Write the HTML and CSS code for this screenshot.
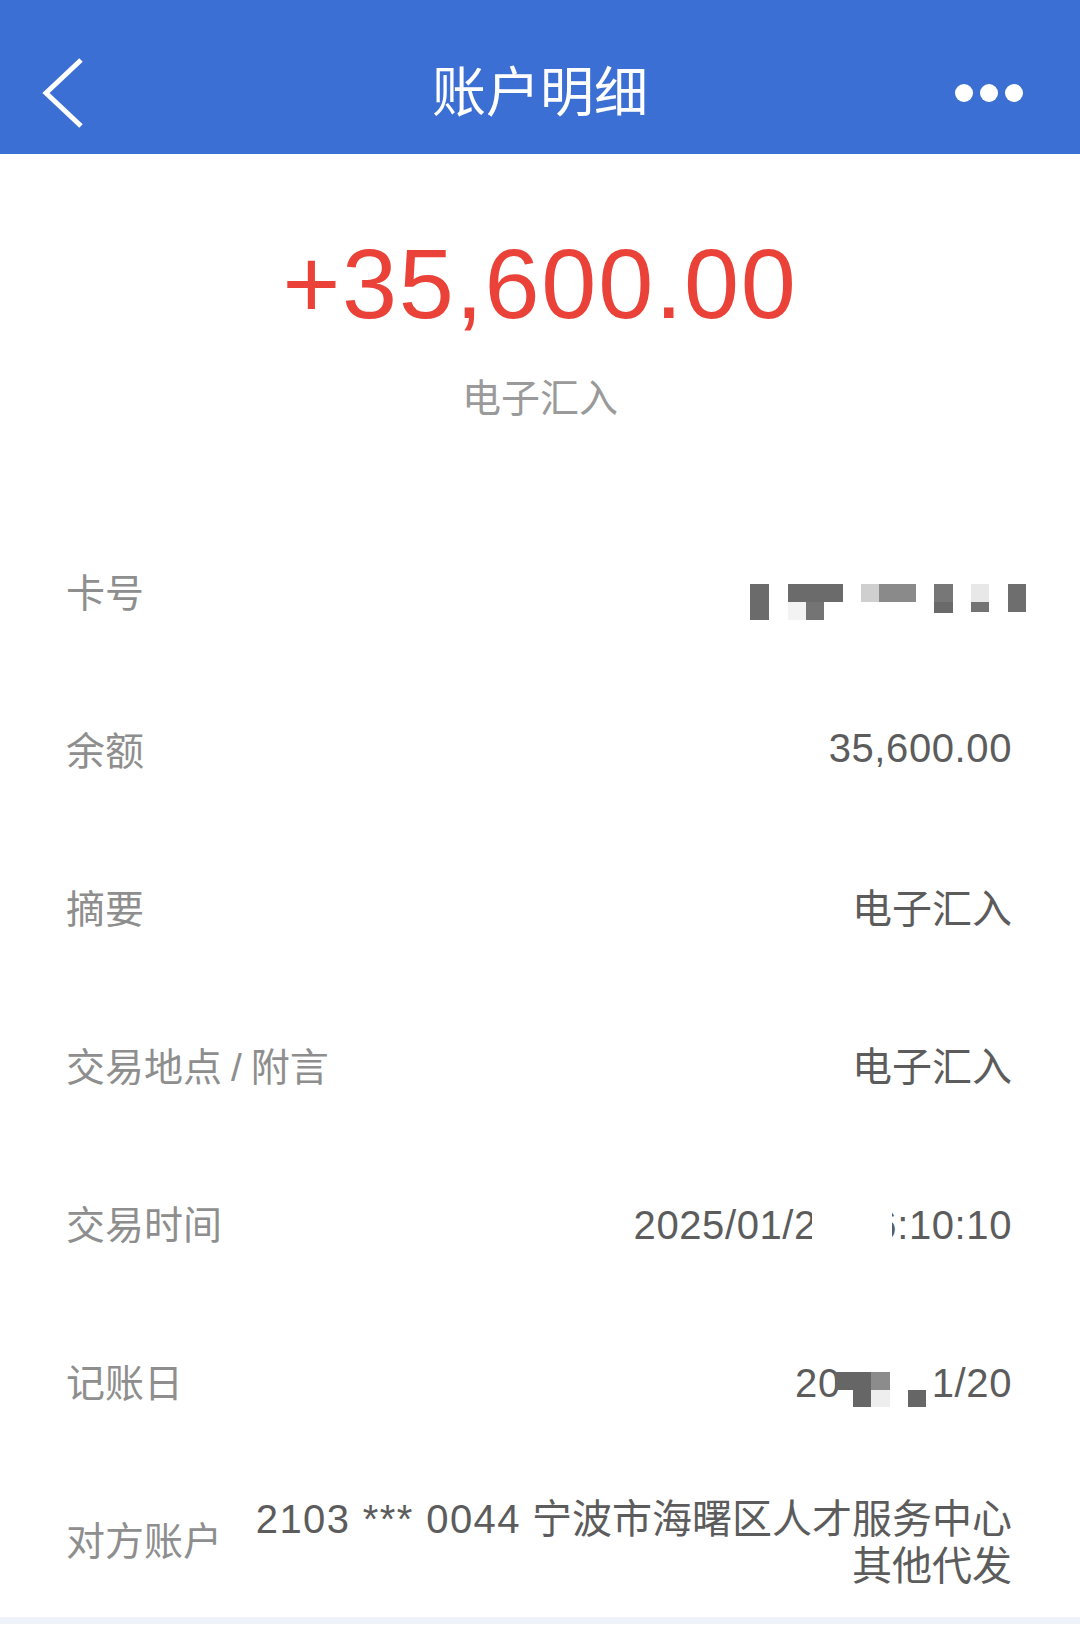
FILE: index.html
```html
<!DOCTYPE html>
<html lang="zh-CN">
<head>
  <meta charset="UTF-8" />
  <title>账户明细</title>
  <link rel="stylesheet" href="styles.css">
</head>
<body>
  <header class="topbar">
    <div class="topbar-left">
      <svg class="back" width="44" height="70" viewBox="0 0 44 70">
        <polyline points="39,2 4,35 39,68" fill="none" stroke="#fff" stroke-width="5" />
      </svg>
    </div>
    <h1 class="title">账户明细</h1>
    <div class="topbar-right">
      <span class="dot"></span><span class="dot"></span><span class="dot"></span>
    </div>
  </header>

  <section class="hero">
    <div class="amount">+35,600.00</div>
    <div class="kind">电子汇入</div>
  </section>

  <ul class="details">
    <li class="row">
      <span class="label">卡号</span>
      <span class="value">
        <!-- 打码 -->
        <svg class="mosaic-card" width="276" height="36" viewBox="0 0 276 36">
          <rect x="0" y="0" width="19" height="36" fill="#6b6b6b" />
          <rect x="38" y="0" width="55" height="18" fill="#6b6b6b" />
          <rect x="38" y="18" width="18" height="18" fill="#f3f3f3" />
          <rect x="56" y="18" width="18" height="18" fill="#747474" />
          <rect x="111" y="0" width="18" height="18" fill="#cfcfcf" />
          <rect x="129" y="0" width="37" height="18" fill="#8a8a8a" />
          <rect x="184" y="0" width="19" height="18" fill="#777" />
          <rect x="184" y="18" width="19" height="11" fill="#6a6a6a" />
          <rect x="221" y="0" width="18" height="18" fill="#e8e8e8" />
          <rect x="221" y="18" width="18" height="10" fill="#747474" />
          <rect x="258" y="0" width="18" height="28" fill="#6e6e6e" />
        </svg>
      </span>
    </li>
    <li class="row">
      <span class="label">余额</span>
      <span class="value num">35,600.00</span>
    </li>
    <li class="row">
      <span class="label">摘要</span>
      <span class="value">电子汇入</span>
    </li>
    <li class="row">
      <span class="label">交易地点<span class="slash">/</span>附言</span>
      <span class="value">电子汇入</span>
    </li>
    <li class="row">
      <span class="label">交易时间</span>
      <span class="value num low masked">2025/01/20 16:10:10<span class="mask"></span></span>
    </li>
    <li class="row">
      <span class="label">记账日</span>
      <span class="value num low">20<svg class="mosaic-date" width="91" height="35" viewBox="0 0 91 35">
          <rect x="0" y="0" width="36" height="18" fill="#666" />
          <rect x="18" y="18" width="18" height="17" fill="#666" />
          <rect x="36" y="0" width="19" height="18" fill="#8c8c8c" />
          <rect x="36" y="18" width="19" height="17" fill="#eeeeee" />
          <rect x="73" y="18" width="18" height="17" fill="#666" />
        </svg>1/20</span>
    </li>
    <li class="row">
      <span class="label">对方账户</span>
      <span class="value multi"><span class="num">2103 *** 0044</span> 宁波市海曙区人才服务中心<br>其他代发</span>
    </li>
  </ul>
  <div class="bottom"></div>
</body>
</html>
```

FILE: styles.css
```css
* {
  box-sizing: border-box;
}

body, html {
  margin: 0;
  padding: 0;
  background: #fff;
  font-family: 'Liberation Sans', 'Noto Sans CJK SC', sans-serif;
}

.topbar {
  height: 154px;
  padding-top: 32px;
  background-color: #3c6fd3;
  display: grid;
  grid-template-columns: 1fr auto 1fr;
  align-items: center;
}

.topbar-left {
  padding-left: 42px;
  display: flex;
  align-items: center;
}

.back {
  display: block;
}

.title {
  margin: 0;
  font-size: 54px;
  font-weight: normal;
  color: #fff;
  line-height: 1;
}

.topbar-right {
  display: flex;
  justify-content: flex-end;
  gap: 7px;
  padding-right: 57px;
}

.dot {
  width: 18px;
  height: 18px;
  border-radius: 50%;
  background: #fff;
}

.hero {
  padding-top: 80px;
  text-align: center;
}

.amount {
  font-size: 99px;
  line-height: 1;
  letter-spacing: 1.7px;
  color: #ea4238;
}

.kind {
  margin-top: 46px;
  font-size: 39px;
  line-height: 1;
  color: #9a9a9a;
}

.details {
  list-style: none;
  margin: 0;
  padding: 93px 0 0;
}

.row {
  height: 158px;
  padding: 0 68px 0 66px;
  display: flex;
  align-items: center;
  justify-content: space-between;
}

.label {
  font-size: 39px;
  color: #8e8e8e;
  white-space: nowrap;
}

.slash {
  margin: 0 9px;
}

.value {
  font-size: 40px;
  color: #5c5c5c;
  text-align: right;
  display: flex;
  align-items: center;
}

.num {
  letter-spacing: 0.6px;
}

.low {
  padding-top: 7px;
}

.multi .num {
  letter-spacing: 1.4px;
}

.mosaic-card {
  display: block;
  margin-top: 24px;
  margin-right: -14px;
}

.mosaic-date {
  display: block;
  margin: 11px 6px 0 -6px;
}

.masked {
  position: relative;
}

.mask {
  position: absolute;
  top: 0;
  bottom: 0;
  right: 120px;
  width: 80px;
  background: #fff;
}

.multi {
  display: block;
  line-height: 47px;
  padding-top: 10px;
}

.bottom {
  height: 7px;
  background: #eef3f9;
}
```
